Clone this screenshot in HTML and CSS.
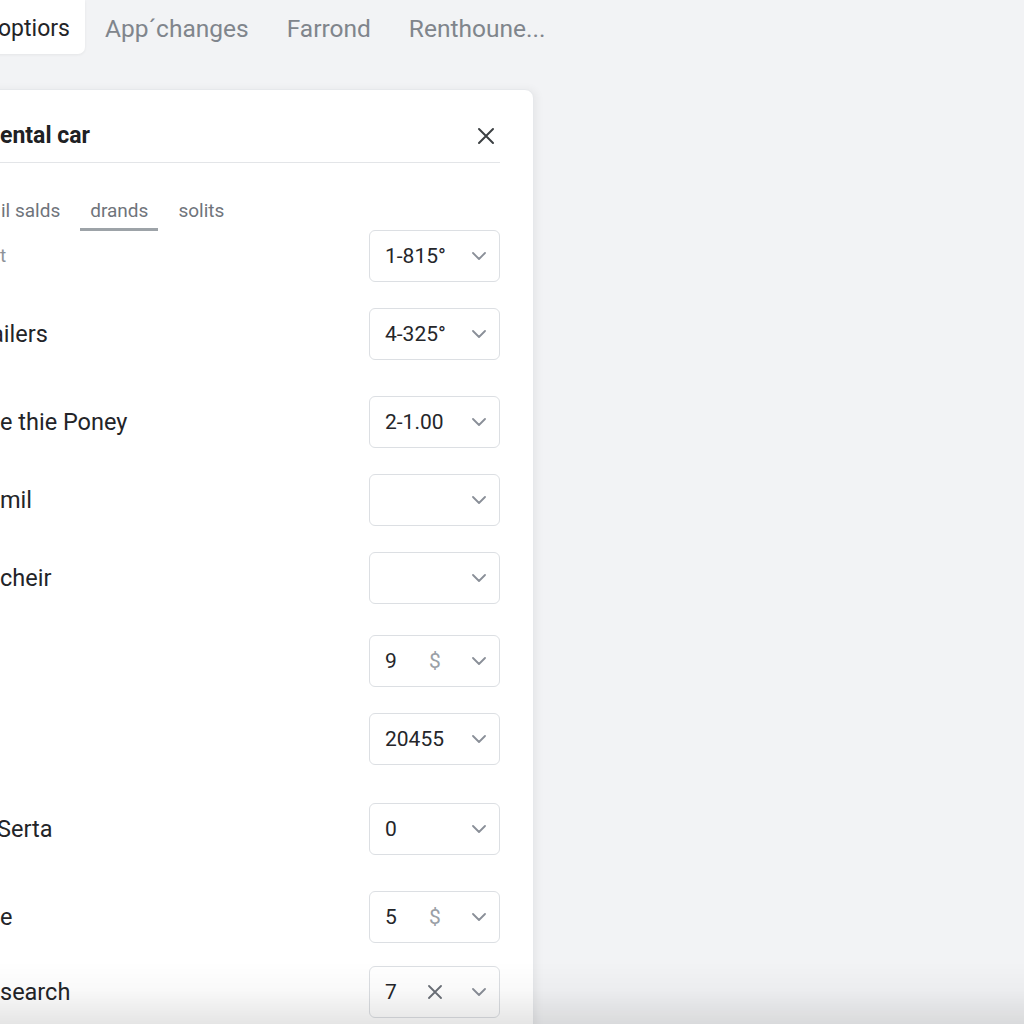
FILE: index.html
```html
<!DOCTYPE html>
<html lang="en">
<head>
<meta charset="utf-8">
<title>Rental car</title>
<link rel="stylesheet" href="styles.css">
</head>
<body>
<nav class="topnav">
  <a class="toptab active">optiors</a>
  <a class="toptab">App´changes</a>
  <a class="toptab">Farrond</a>
  <a class="toptab">Renthoune...</a>
</nav>

<section class="panel">
  <header class="panel-head">
    <h1 class="title">ental car</h1>
    <button class="close" aria-label="Close">
      <svg width="18" height="18" viewBox="0 0 18 18"><path d="M2 2 L16 16 M16 2 L2 16" stroke="#3c4043" stroke-width="2" stroke-linecap="round" fill="none"/></svg>
    </button>
  </header>

  <div class="subtabs">
    <span class="subtab first">il salds</span>
    <span class="subtab on">drands</span>
    <span class="subtab">solits</span>
  </div>

  <div class="rows">
    <div class="row first-row">
      <span class="label muted">t</span>
      <div class="select"><span class="val">1-815°</span><span class="ico"></span><span class="chev"><svg width="14" height="8" viewBox="0 0 14 8"><path d="M1 1 L7 7 L13 1" fill="none" stroke="#8a8f98" stroke-width="1.8" stroke-linecap="round" stroke-linejoin="round"/></svg></span></div>
    </div>
    <div class="row">
      <span class="label cut">ailers</span>
      <div class="select"><span class="val">4-325°</span><span class="ico"></span><span class="chev"><svg width="14" height="8" viewBox="0 0 14 8"><path d="M1 1 L7 7 L13 1" fill="none" stroke="#8a8f98" stroke-width="1.8" stroke-linecap="round" stroke-linejoin="round"/></svg></span></div>
    </div>
    <div class="row loose">
      <span class="label">e thie Poney</span>
      <div class="select"><span class="val">2-1.00</span><span class="ico"></span><span class="chev"><svg width="14" height="8" viewBox="0 0 14 8"><path d="M1 1 L7 7 L13 1" fill="none" stroke="#8a8f98" stroke-width="1.8" stroke-linecap="round" stroke-linejoin="round"/></svg></span></div>
    </div>
    <div class="row">
      <span class="label">mil</span>
      <div class="select"><span class="val"></span><span class="ico"></span><span class="chev"><svg width="14" height="8" viewBox="0 0 14 8"><path d="M1 1 L7 7 L13 1" fill="none" stroke="#8a8f98" stroke-width="1.8" stroke-linecap="round" stroke-linejoin="round"/></svg></span></div>
    </div>
    <div class="row">
      <span class="label">cheir</span>
      <div class="select"><span class="val"></span><span class="ico"></span><span class="chev"><svg width="14" height="8" viewBox="0 0 14 8"><path d="M1 1 L7 7 L13 1" fill="none" stroke="#8a8f98" stroke-width="1.8" stroke-linecap="round" stroke-linejoin="round"/></svg></span></div>
    </div>
    <div class="row mid">
      <span class="label"></span>
      <div class="select"><span class="val">9</span><span class="ico dollar">$</span><span class="chev"><svg width="14" height="8" viewBox="0 0 14 8"><path d="M1 1 L7 7 L13 1" fill="none" stroke="#8a8f98" stroke-width="1.8" stroke-linecap="round" stroke-linejoin="round"/></svg></span></div>
    </div>
    <div class="row">
      <span class="label"></span>
      <div class="select"><span class="val">20455</span><span class="ico"></span><span class="chev"><svg width="14" height="8" viewBox="0 0 14 8"><path d="M1 1 L7 7 L13 1" fill="none" stroke="#8a8f98" stroke-width="1.8" stroke-linecap="round" stroke-linejoin="round"/></svg></span></div>
    </div>
    <div class="row wide">
      <span class="label cut-s">Serta</span>
      <div class="select"><span class="val">0</span><span class="ico"></span><span class="chev"><svg width="14" height="8" viewBox="0 0 14 8"><path d="M1 1 L7 7 L13 1" fill="none" stroke="#8a8f98" stroke-width="1.8" stroke-linecap="round" stroke-linejoin="round"/></svg></span></div>
    </div>
    <div class="row loose">
      <span class="label">e</span>
      <div class="select"><span class="val">5</span><span class="ico dollar">$</span><span class="chev"><svg width="14" height="8" viewBox="0 0 14 8"><path d="M1 1 L7 7 L13 1" fill="none" stroke="#8a8f98" stroke-width="1.8" stroke-linecap="round" stroke-linejoin="round"/></svg></span></div>
    </div>
    <div class="row tight">
      <span class="label">search</span>
      <div class="select"><span class="val">7</span><span class="ico"><svg width="14" height="14" viewBox="0 0 14 14"><path d="M1 1 L13 13 M13 1 L1 13" stroke="#6b7078" stroke-width="1.8" stroke-linecap="round" fill="none"/></svg></span><span class="chev"><svg width="14" height="8" viewBox="0 0 14 8"><path d="M1 1 L7 7 L13 1" fill="none" stroke="#8a8f98" stroke-width="1.8" stroke-linecap="round" stroke-linejoin="round"/></svg></span></div>
    </div>
  </div>
</section>

<div class="bottom-fade"></div>
</body>
</html>
```

FILE: styles.css
```css
html, body {
  margin: 0;
  padding: 0;
  height: 100%;
  overflow: hidden;
}

body {
  background: #f2f3f5;
  font-family: Roboto, "Noto Sans", "Liberation Sans", sans-serif;
  color: #2a2b2e;
}

.topnav {
  display: flex;
  height: 54px;
  align-items: stretch;
}

.toptab {
  display: flex;
  align-items: center;
  padding: 2px 18px 0 20px;
  font-size: 24.5px;
  color: #80858c;
  text-decoration: none;
  white-space: nowrap;
}

.toptab.active {
  margin-left: -20px;
  padding: 2px 15px 0 18px;
  font-size: 23px;
  background: #ffffff;
  color: #232427;
  border-radius: 0 0 7px 0;
  box-shadow: 0 1px 3px rgba(0, 0, 0, 0.06);
}

.panel {
  margin-top: 35px;
  margin-left: -20px;
  width: 554px;
  min-height: 1100px;
  box-sizing: border-box;
  padding: 0 33px 0 19px;
  background: #ffffff;
  border: 1px solid #e6e8eb;
  border-radius: 0 9px 0 0;
  box-shadow: 3px 0 8px rgba(0, 0, 0, 0.05);
}

.panel-head {
  height: 73px;
  box-sizing: border-box;
  padding: 19px 5px 0 0;
  display: flex;
  align-items: center;
  justify-content: space-between;
  border-bottom: 1px solid #e3e5e8;
}

.title {
  margin: 0;
  font-size: 23px;
  font-weight: 700;
  color: #202124;
}

.close {
  background: none;
  border: 0;
  padding: 0;
  width: 18px;
  height: 18px;
  display: flex;
  cursor: pointer;
}

.subtabs {
  display: flex;
  gap: 10px;
  margin-left: -9px;
}

.subtab {
  padding: 36px 10px 5px;
  line-height: 24px;
  font-size: 19px;
  color: #6f747b;
  border-bottom: 3px solid transparent;
  white-space: nowrap;
}

.subtab.on {
  border-bottom-color: #9da3a8;
}

.row {
  display: flex;
  justify-content: space-between;
  align-items: center;
  height: 52px;
  margin-top: 26px;
}

.row.first-row { margin-top: -1px; }
.row.loose { margin-top: 36px; }
.row.mid { margin-top: 31px; }
.row.wide { margin-top: 38px; }
.row.tight { margin-top: 23px; }

.label {
  font-size: 23.5px;
  color: #232428;
  white-space: nowrap;
}

.label.muted {
  font-size: 19px;
  color: #8d9298;
  margin-top: -2px;
}

.label.cut { margin-left: -9px; }
.label.cut-s { margin-left: -3px; }

.select {
  width: 131px;
  height: 52px;
  box-sizing: border-box;
  border: 1px solid #dcdfe3;
  border-radius: 6px;
  display: grid;
  grid-template-columns: minmax(0, 1fr) 24px 24px;
  column-gap: 20px;
  align-items: center;
  padding: 0 8px 0 15px;
  background: #fff;
}

.val {
  font-size: 21px;
  color: #25262a;
  white-space: nowrap;
  overflow: visible;
}

.ico {
  display: flex;
  justify-content: center;
  align-items: center;
}

.ico.dollar {
  font-size: 21px;
  color: #9aa0a6;
}

.chev {
  display: flex;
  justify-content: center;
  align-items: center;
}

.bottom-fade {
  position: fixed;
  left: 0;
  right: 0;
  bottom: 0;
  height: 62px;
  background: linear-gradient(to bottom, rgba(0, 0, 0, 0) 0%, rgba(0, 0, 0, 0.025) 45%, rgba(0, 0, 0, 0.1) 100%);
  pointer-events: none;
}
```
